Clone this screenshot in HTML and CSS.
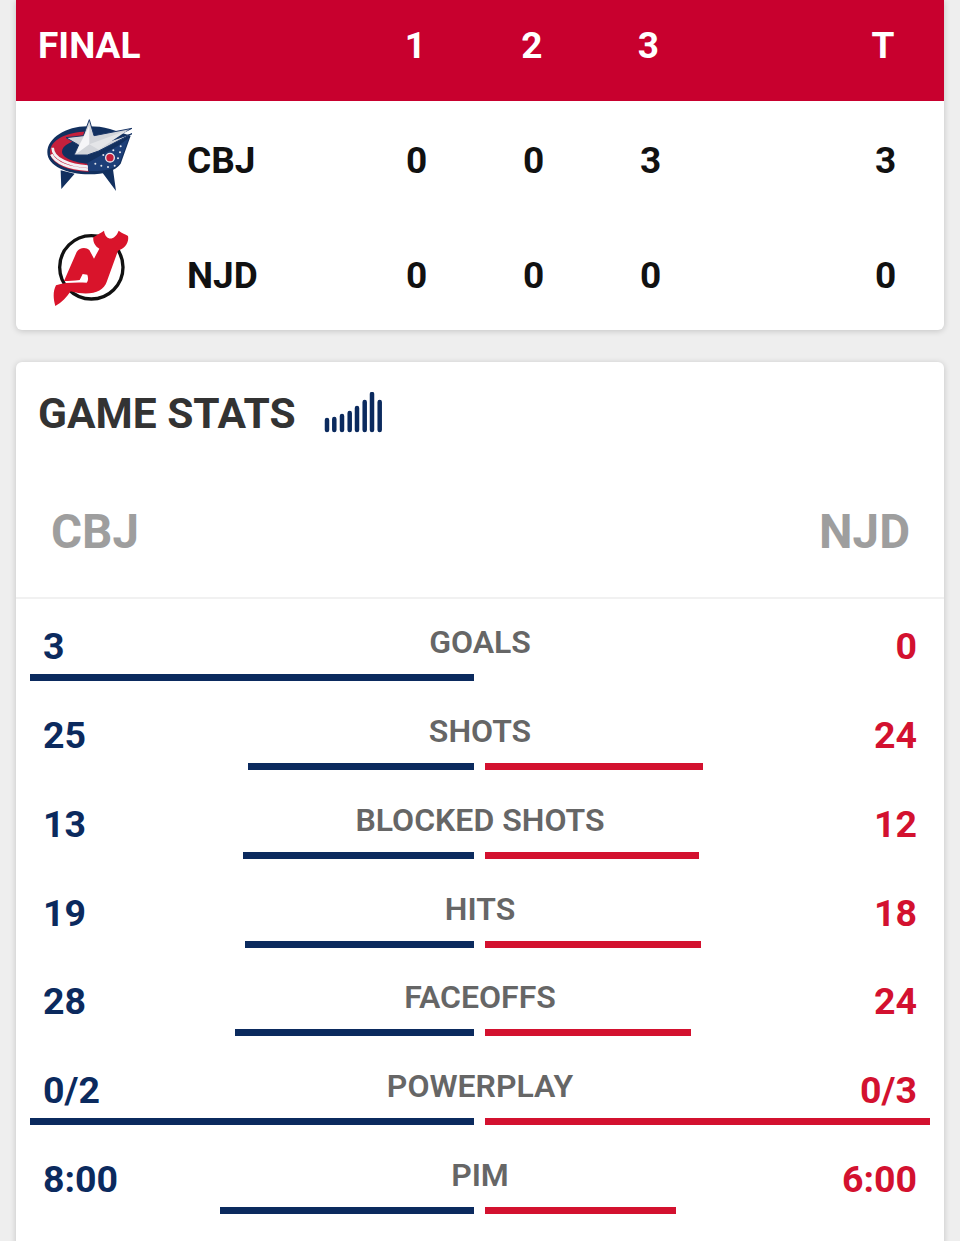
FILE: index.html
```html
<!DOCTYPE html>
<html lang="en">
<head>
    <meta charset="UTF-8">
    <meta name="viewport" content="width=device-width, initial-scale=1.0">
    <title>Game Stats</title>
    <link rel="stylesheet" href="styles.css">
</head>
<body>
    <div class="page">
        <!-- score table -->
        <div class="card score-card">
            <div class="score-row score-head">
                <span class="status">FINAL</span>
                <span class="num">1</span>
                <span class="num">2</span>
                <span class="num">3</span>
                <span class="num total">T</span>
            </div>
            <div class="score-row team-row">
                <svg class="team-logo" viewBox="0 0 360 300">
                    <path d="M92 196 L94 252 L134 206 Z M218 204 L258 258 L248 186 Z" fill="#12305f"/>
                    <path d="M176 64 C112 62 52 98 52 142 C52 184 112 208 178 208 C222 208 256 198 272 176 L302 92 L240 72 C220 66 198 64 176 64 Z" fill="#12305f"/>
                    <path d="M170 80 C112 80 60 104 60 142 C60 176 118 200 176 200 L172 176 C132 172 96 158 96 140 C96 120 128 106 170 100 Z" fill="#c5203c"/>
                    <path d="M68 128 C68 162 120 182 174 185 M64 148 C78 176 124 190 174 194" fill="none" stroke="#f1f1f4" stroke-width="8"/>
                    <path d="M172 174 L262 124 L296 100 L268 176 C250 194 212 200 176 198 Z" fill="#1d3f78"/>
                    <path d="M178 44 L192 92 L306 70 L216 116 L306 86 L206 138 L172 150 L132 150 L146 120 L108 98 L160 92 Z" fill="#d3d5da" stroke="#1b3768" stroke-width="3"/>
                    <path d="M178 62 L178 118 L138 147 L150 116 Z" fill="#f6f6f8"/>
                    <path d="M178 118 L296 74 L206 134 Z" fill="#e4e5e8"/>
                    <circle cx="240" cy="158" r="13" fill="#c5203c" stroke="#e9e9ee" stroke-width="4"/>
                    <g fill="#e6e8ee">
                        <circle cx="196" cy="176" r="3"/><circle cx="214" cy="182" r="3"/><circle cx="234" cy="186" r="3"/>
                        <circle cx="254" cy="182" r="3"/><circle cx="264" cy="160" r="3"/><circle cx="270" cy="142" r="3"/>
                        <circle cx="272" cy="124" r="3"/><circle cx="250" cy="136" r="3"/><circle cx="220" cy="150" r="3"/>
                    </g>
                </svg>
                <span class="abbr">CBJ</span>
                <span class="num">0</span>
                <span class="num">0</span>
                <span class="num">3</span>
                <span class="num total">3</span>
            </div>
            <div class="score-row team-row">
                <svg class="team-logo" viewBox="0 0 360 300">
                    <circle cx="184" cy="142" r="95" fill="#fff" stroke="#111" stroke-width="10"/>
                    <path d="M190 52 C200 44 212 40 222 32 C226 62 254 64 266 32 C276 40 286 42 294 48 C298 68 284 86 264 92 L230 186 C220 216 180 230 122 214 C110 232 96 248 76 258 C70 236 68 216 78 196 C100 188 130 187 170 188 C175 184 175 172 172 164 L158 162 L149 180 C130 182 118 183 102 183 L140 96 C148 82 168 80 178 90 L192 116 L208 86 C196 80 188 66 190 52 Z" fill="#d9142b"/>
                </svg>
                <span class="abbr">NJD</span>
                <span class="num">0</span>
                <span class="num">0</span>
                <span class="num">0</span>
                <span class="num total">0</span>
            </div>
        </div>

        <!-- game stats -->
        <div class="card stats-card">
            <div class="stats-title">
                <h2>GAME STATS</h2>
                <svg class="signal" viewBox="0 0 60 42" width="60" height="42">
                    <path d="M3 28V38M10.300 27V38M18 24V38M25.700 21V38M33 16V38M40.700 10V38M48 2V38M55.700 10V38"/>
                </svg>
            </div>
            <div class="teams">
                <span>CBJ</span>
                <span>NJD</span>
            </div>

            <div class="stat">
                <div class="stat-text"><span class="away">3</span><span class="label">GOALS</span><span class="home">0</span></div>
                <div class="bars">
                    <div class="bar-side left"><i class="bar" style="width: 100%"></i></div>
                    <div class="bar-side"><i class="bar" style="width: 0%"></i></div>
                </div>
            </div>
            <div class="stat">
                <div class="stat-text"><span class="away">25</span><span class="label">SHOTS</span><span class="home">24</span></div>
                <div class="bars">
                    <div class="bar-side left"><i class="bar" style="width: 51%"></i></div>
                    <div class="bar-side"><i class="bar" style="width: 49%"></i></div>
                </div>
            </div>
            <div class="stat">
                <div class="stat-text"><span class="away">13</span><span class="label">BLOCKED SHOTS</span><span class="home">12</span></div>
                <div class="bars">
                    <div class="bar-side left"><i class="bar" style="width: 52%"></i></div>
                    <div class="bar-side"><i class="bar" style="width: 48%"></i></div>
                </div>
            </div>
            <div class="stat">
                <div class="stat-text"><span class="away">19</span><span class="label">HITS</span><span class="home">18</span></div>
                <div class="bars">
                    <div class="bar-side left"><i class="bar" style="width: 51.500%"></i></div>
                    <div class="bar-side"><i class="bar" style="width: 48.500%"></i></div>
                </div>
            </div>
            <div class="stat">
                <div class="stat-text"><span class="away">28</span><span class="label">FACEOFFS</span><span class="home">24</span></div>
                <div class="bars">
                    <div class="bar-side left"><i class="bar" style="width: 53.800%"></i></div>
                    <div class="bar-side"><i class="bar" style="width: 46.200%"></i></div>
                </div>
            </div>
            <div class="stat">
                <div class="stat-text"><span class="away">0/2</span><span class="label">POWERPLAY</span><span class="home">0/3</span></div>
                <div class="bars">
                    <div class="bar-side left"><i class="bar" style="width: 100%"></i></div>
                    <div class="bar-side"><i class="bar" style="width: 100%"></i></div>
                </div>
            </div>
            <div class="stat">
                <div class="stat-text"><span class="away">8:00</span><span class="label">PIM</span><span class="home">6:00</span></div>
                <div class="bars">
                    <div class="bar-side left"><i class="bar" style="width: 57.100%"></i></div>
                    <div class="bar-side"><i class="bar" style="width: 42.900%"></i></div>
                </div>
            </div>
        </div>
    </div>
</body>
</html>
```

FILE: styles.css
```css
* {
    margin: 0;
    padding: 0;
    box-sizing: border-box;
    font-family: Roboto, "Liberation Sans", sans-serif;
}

body {
    background: #eeeeee;
}

.page {
    height: 100vh;
    padding: 0 16px;
    overflow: hidden;
}

.card {
    background: #fff;
    border-radius: 6px;
    box-shadow: 0 1px 6px rgba(0, 0, 0, 0.18);
}

.score-card {
    height: 330px;
    overflow: hidden;
    border-radius: 0 0 6px 6px;
}

/* score table */
.score-row {
    display: grid;
    grid-template-columns: 341px 116.500px 116.500px 116.500px 116.500px 120px;
    align-items: center;
    color: #111;
    font-size: 37px;
    font-weight: 700;
}

.score-head {
    height: 101px;
    padding-bottom: 10px;
    background: #c8002e;
    color: #fff;
}

.status {
    padding-left: 22px;
}

.num {
    text-align: center;
}

.total {
    grid-column: 6;
}

.team-row {
    height: 115px;
    padding-top: 4px;
    grid-template-columns: 171px 171px 117px 117px 117px 117px 119px;
}

.team-row .total {
    grid-column: 7;
}

.team-logo {
    width: 120px;
    height: 100px;
    margin: -11px 0 0 14px;
}

.abbr {
    color: #111;
}

/* game stats */
.stats-card {
    height: 1000px;
    margin-top: 32px;
}

.stats-title {
    display: flex;
    align-items: center;
    gap: 28px;
    height: 104px;
    padding: 0 22px 2px;
}

.stats-title h2 {
    color: #333;
    font-size: 42.500px;
    font-weight: 700;
}

.signal {
    fill: none;
    stroke: #0b2a5e;
    stroke-width: 4.500;
    stroke-linecap: round;
}

.teams {
    display: flex;
    justify-content: space-between;
    height: 133px;
    padding: 38px 34px 0 35px;
    border-bottom: 2px solid #f1f1f1;
    color: #9e9e9e;
    font-size: 47.500px;
    font-weight: 700;
}

.stat {
    height: 88.850px;
    padding: 26px 14px 0;
}

.stat-text {
    display: grid;
    grid-template-columns: 1fr auto 1fr;
    height: 49px;
    padding: 0 13px;
    font-size: 37.500px;
    font-weight: 700;
    line-height: 43px;
}

.away {
    color: #0b2a5e;
}

.home {
    color: #d3112f;
    text-align: right;
}

.label {
    color: #666;
    font-size: 32px;
    font-weight: 600;
    line-height: 35px;
}

.bars {
    display: flex;
    gap: 11px;
}

.bar-side {
    display: flex;
    flex: 0 0 445px;
    color: #d3112f;
}

.bar-side.left {
    flex-basis: 444px;
    justify-content: flex-end;
    color: #0b2a5e;
}

.bar {
    display: block;
    height: 7px;
    background: currentColor;
}
```
